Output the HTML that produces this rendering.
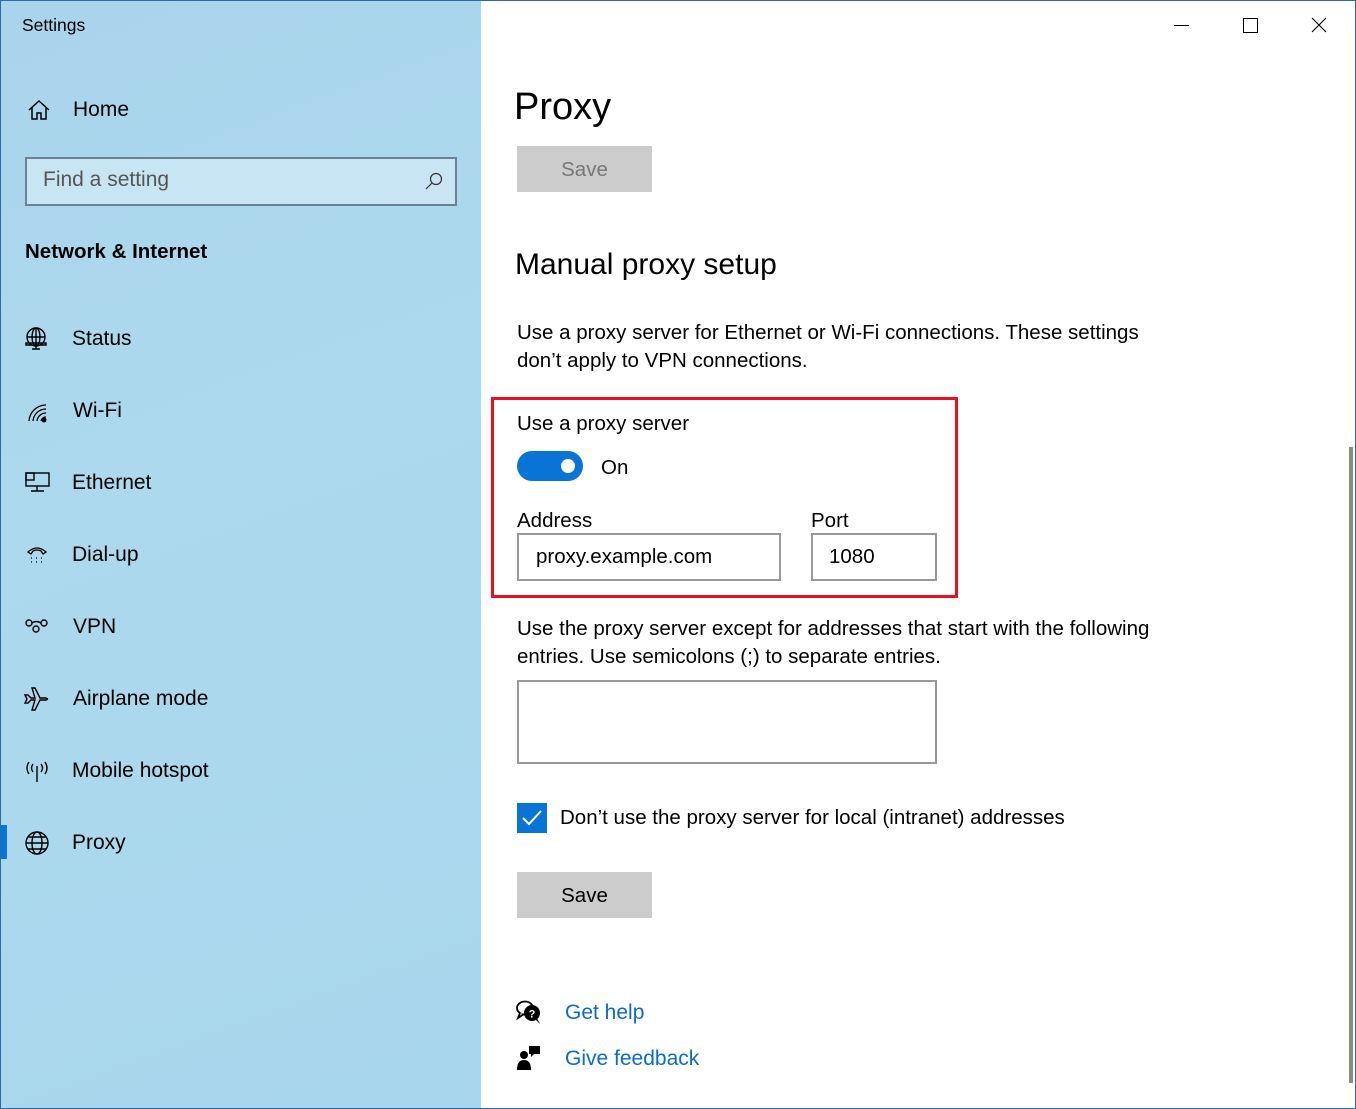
<!DOCTYPE html>
<html><head><meta charset="utf-8"><style>
*{margin:0;padding:0;box-sizing:border-box}
body{width:1356px;height:1109px;position:relative;overflow:hidden;font-family:"Liberation Sans",sans-serif;color:#000;background:#fff}
.a{position:absolute;white-space:nowrap}
#side{position:absolute;left:0;top:0;width:481px;height:1109px;background:linear-gradient(160deg,#a9d4ec 0%,#add9ee 40%,#a8d6ec 100%)}
.nav{font-size:21px}
.ic{position:absolute}
.f{font-size:20.5px}
.box{position:absolute;border:2px solid #999;background:#fff}
</style></head><body>
<div id="side"></div>
<div class="a" style="left:0;top:0;width:1356px;height:1109px;border:1px solid #2b6ca8;pointer-events:none;z-index:5"></div>
<div class="a" style="left:22px;top:15px;font-size:17.5px">Settings</div>
<svg class="ic" style="left:27px;top:99px" width="24" height="22" viewBox="0 0 24 22" fill="none" stroke="#000" stroke-width="1.5"><path d="M2 11 L12 2 L22 11 M5 8 V20 H10 V14 H14 V20 H19 V8"/></svg>
<div class="a nav" style="left:73px;top:98px">Home</div>
<div class="a" style="left:25px;top:157px;width:432px;height:49px;border:2px solid #6b8294;background:rgba(220,238,248,.6)"></div>
<div class="a" style="left:43px;top:168px;font-size:21px;color:#555">Find a setting</div>
<svg class="ic" style="left:424px;top:171px" width="20" height="20" viewBox="0 0 20 20" fill="none" stroke="#333" stroke-width="1.2"><circle cx="12" cy="8" r="5.5"/><path d="M8 12 L2 18"/></svg>
<div class="a" style="left:25px;top:240px;font-size:20.5px;font-weight:bold">Network &amp; Internet</div>

<svg class="ic" style="left:24px;top:327px" width="26" height="24" viewBox="0 0 26 24" fill="none" stroke="#000" stroke-width="1.4"><circle cx="12" cy="10" r="9"/><ellipse cx="12" cy="10" rx="4" ry="9"/><path d="M3 10H21M12 1V19M2 16H22V18H2Z M8 22H16 M12 19V22"/></svg>
<div class="a nav" style="left:72px;top:327px">Status</div>
<svg class="ic" style="left:27px;top:401px" width="22" height="22" viewBox="0 0 22 22" fill="none" stroke="#000" stroke-width="1.3"><path d="M2 20 A17 17 0 0 1 19 4 M6 20 A13 13 0 0 1 19 8 M10 20 A9 9 0 0 1 19 12 M14 20 A5 5 0 0 1 19 16"/><circle cx="17" cy="19" r="1.8" fill="#000"/></svg>
<div class="a nav" style="left:73px;top:399px">Wi-Fi</div>
<svg class="ic" style="left:25px;top:472px" width="26" height="22" viewBox="0 0 26 22" fill="none" stroke="#000" stroke-width="1.4"><rect x="1" y="1" width="23" height="13"/><rect x="1" y="1" width="8" height="7"/><path d="M12 14V19 M6 19H19"/></svg>
<div class="a nav" style="left:72px;top:471px">Ethernet</div>
<svg class="ic" style="left:26px;top:544px" width="22" height="22" viewBox="0 0 22 22" fill="none" stroke="#000" stroke-width="1.3"><path d="M2 8 Q11 0 20 8 L17 10 L15 7 Q11 5 7 7 L5 10 Z"/><path d="M5 14h1M10 14h1M15 14h1M5 18h1M10 18h1M15 18h1"/></svg>
<div class="a nav" style="left:72px;top:543px">Dial-up</div>
<svg class="ic" style="left:24px;top:617px" width="26" height="20" viewBox="0 0 26 20" fill="none" stroke="#000" stroke-width="1.4"><circle cx="5" cy="6" r="3"/><circle cx="20" cy="6" r="3"/><circle cx="12" cy="12" r="3"/><path d="M8 6 Q12 3 17 6"/></svg>
<div class="a nav" style="left:73px;top:615px">VPN</div>
<svg class="ic" style="left:24px;top:686px" width="26" height="26" viewBox="0 0 26 26" fill="none" stroke="#000" stroke-width="1.4"><path d="M1 9 L4 9 L7 12 L11 12 L8 2 L11 2 L16 12 L22 12 Q25 13 22 14 L16 14 L11 24 L8 24 L11 14 L7 14 L4 17 L1 17 L3 13 Z"/></svg>
<div class="a nav" style="left:73px;top:687px">Airplane mode</div>
<svg class="ic" style="left:24px;top:760px" width="26" height="24" viewBox="0 0 26 24" fill="none" stroke="#000" stroke-width="1.4"><path d="M13 6V22 M9 4 Q6 8 9 12 M17 4 Q20 8 17 12 M5 2 Q1 8 5 14 M21 2 Q25 8 21 14"/></svg>
<div class="a nav" style="left:72px;top:759px">Mobile hotspot</div>
<div class="a" style="left:1px;top:825px;width:6px;height:34px;background:#0a74d6"></div>
<svg class="ic" style="left:24px;top:830px" width="26" height="26" viewBox="0 0 26 26" fill="none" stroke="#000" stroke-width="1.4"><circle cx="13" cy="13" r="11"/><ellipse cx="13" cy="13" rx="5" ry="11"/><path d="M2 13H24M4 7H22M4 19H22"/></svg>
<div class="a nav" style="left:72px;top:831px">Proxy</div>

<div class="a" style="left:1174px;top:25px;width:15px;height:1px;background:#000"></div>
<div class="a" style="left:1243px;top:18px;width:15px;height:15px;border:1px solid #000"></div>
<svg class="ic" style="left:1311px;top:17px" width="16" height="16" viewBox="0 0 16 16" stroke="#000" stroke-width="1.1"><path d="M1 1L15 15M15 1L1 15"/></svg>
<div class="a" style="left:1349px;top:447px;width:4px;height:636px;background:#8a8a8a"></div>

<div class="a" style="left:514px;top:86px;font-size:38px">Proxy</div>
<div class="a" style="left:517px;top:146px;width:135px;height:46px;background:#ccc;color:#777;font-size:20.5px;text-align:center;line-height:48px">Save</div>
<div class="a" style="left:515px;top:248px;font-size:30px">Manual proxy setup</div>
<div class="a f" style="left:517px;top:319px;line-height:28px">Use a proxy server for Ethernet or Wi-Fi connections. These settings<br>don’t apply to VPN connections.</div>
<div class="a" style="left:491px;top:397px;width:467px;height:201px;border:3px solid #e81123"></div>
<div class="a f" style="left:517px;top:412px">Use a proxy server</div>
<div class="a" style="left:517px;top:451px;width:66px;height:30px;border-radius:15px;background:#0a74d6"></div>
<div class="a" style="left:561px;top:459px;width:14px;height:14px;border-radius:7px;background:#fff"></div>
<div class="a f" style="left:601px;top:456px">On</div>
<div class="a f" style="left:517px;top:509px">Address</div>
<div class="a f" style="left:811px;top:509px">Port</div>
<div class="box" style="left:517px;top:533px;width:264px;height:48px"></div>
<div class="a f" style="left:536px;top:545px">proxy.example.com</div>
<div class="box" style="left:811px;top:533px;width:126px;height:48px"></div>
<div class="a f" style="left:829px;top:545px">1080</div>
<div class="a f" style="left:517px;top:615px;line-height:28px">Use the proxy server except for addresses that start with the following<br>entries. Use semicolons (;) to separate entries.</div>
<div class="box" style="left:517px;top:680px;width:420px;height:84px"></div>
<div class="a" style="left:517px;top:803px;width:30px;height:30px;background:#0a74d6"></div>
<svg class="ic" style="left:517px;top:803px" width="30" height="30" viewBox="0 0 30 30" fill="none" stroke="#fff" stroke-width="2"><path d="M6 15L12 21L24 8"/></svg>
<div class="a f" style="left:560px;top:806px">Don’t use the proxy server for local (intranet) addresses</div>
<div class="a" style="left:517px;top:872px;width:135px;height:46px;background:#ccc;font-size:20.5px;text-align:center;line-height:48px">Save</div>
<svg class="ic" style="left:515px;top:1000px" width="28" height="26" viewBox="0 0 28 26"><ellipse cx="10" cy="8" rx="8" ry="6.5" fill="#fff" stroke="#000" stroke-width="1.8"/><path d="M5 13 L3 18 L9 14" fill="#fff" stroke="#000" stroke-width="1.8"/><circle cx="17" cy="13" r="8" fill="#000"/><path d="M20 19 L25 24 L22 18Z" fill="#000"/><text x="17" y="17.5" font-size="11" font-weight="bold" fill="#fff" text-anchor="middle" font-family="Liberation Sans">?</text></svg>
<div class="a" style="left:565px;top:1001px;font-size:21px;color:#0a6cc8">Get help</div>
<svg class="ic" style="left:516px;top:1045px" width="26" height="26" viewBox="0 0 26 26" fill="#000"><circle cx="8" cy="10" r="4"/><path d="M1 25 Q1 15 8 15 Q15 15 15 25Z"/><path d="M13 1H24V9H18L15 12V9H13Z"/></svg>
<div class="a" style="left:565px;top:1047px;font-size:21px;color:#0a6cc8">Give feedback</div>
</body></html>
